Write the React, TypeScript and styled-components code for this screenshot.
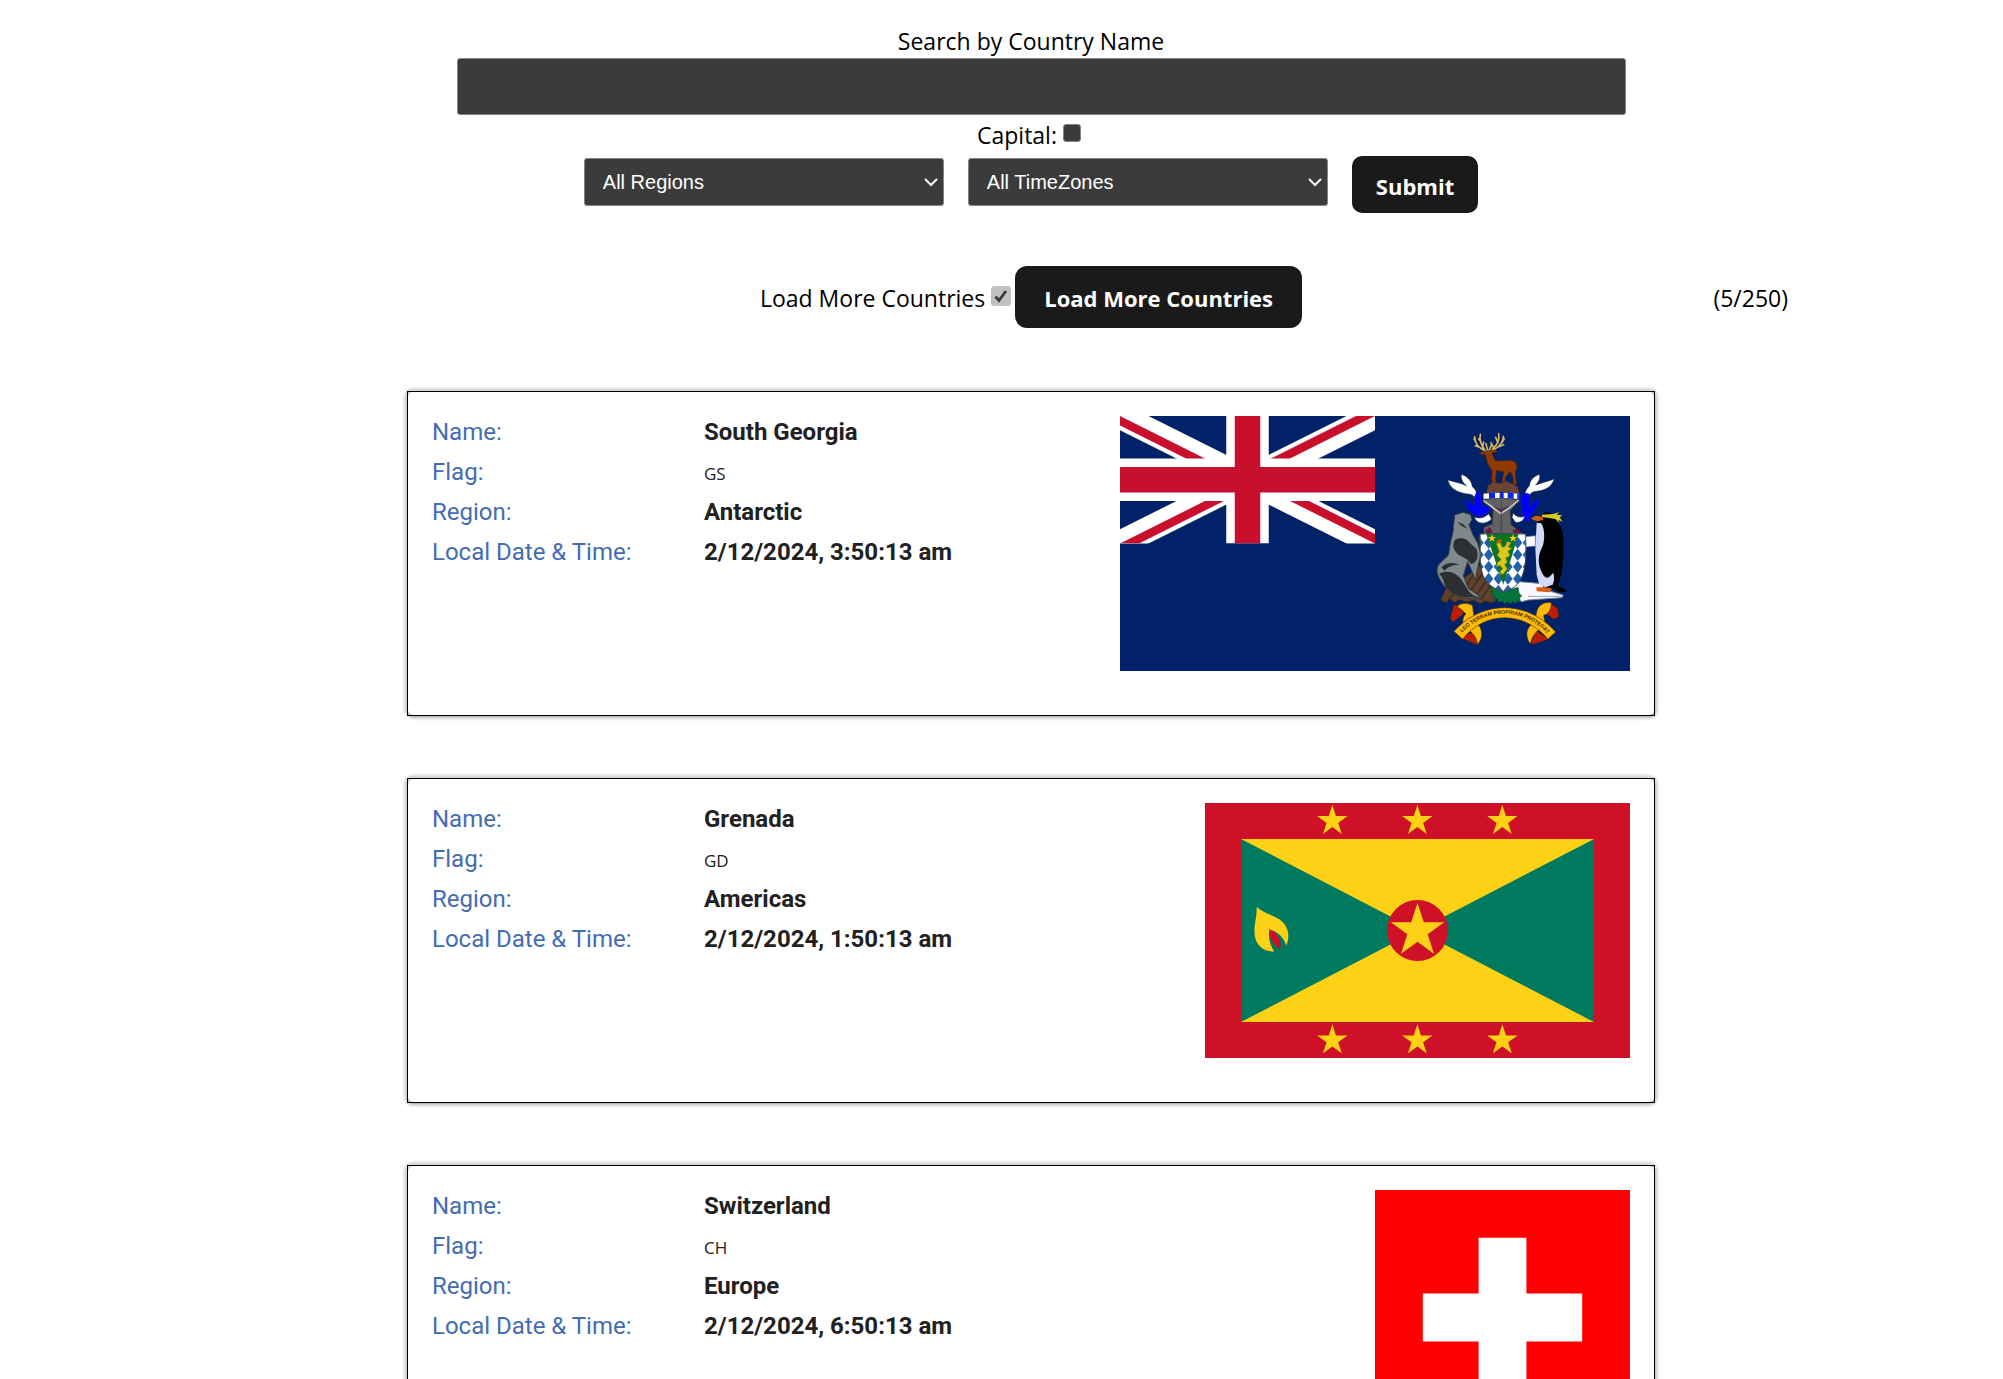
import React, { useId, useState } from "react";
import styled, { createGlobalStyle } from "styled-components";

const GlobalStyle = createGlobalStyle`
  *, *::before, *::after { box-sizing: border-box; }
  body {
    margin: 0;
    background: #fff;
    color: #000;
    font-family: "Segoe UI", "Open Sans", sans-serif;
    font-size: 23px;
    line-height: 32px;
  }
`;

const Page = styled.main`
  display: flex;
  flex-direction: column;
  align-items: center;
  padding: 26px 0 62px 59px;
`;

const SearchForm = styled.form`
  display: flex;
  flex-direction: column;
  align-items: center;
  width: 100%;
`;

const SearchLabel = styled.label`
  padding-bottom: 2px;
  line-height: 30px;
`;

const SearchInput = styled.input`
  color-scheme: dark;
  width: calc(100% - 40px);
  max-width: 1169px;
  height: 57px;
  margin-left: 20px;
  padding: 0 18px;
  border: 1px solid #858585;
  border-radius: 3px;
  background: #3b3b3b;
  color: #fff;
  font: 20px/24px "Liberation Sans", sans-serif;
`;

const CapitalRow = styled.div`
  display: flex;
  align-items: center;
  gap: 6px;
  height: 41px;
  padding-bottom: 2px;
`;

const CheckBox = styled.input<{ $large?: boolean }>`
  appearance: none;
  width: ${(p) => (p.$large ? 20 : 18)}px;
  height: ${(p) => (p.$large ? 20 : 18)}px;
  margin: 0 4px ${(p) => (p.$large ? 2 : 4)}px 0;
  border: 1px solid #858585;
  border-radius: 3px;
  background: #3b3b3b;

  &:checked {
    border-color: #c1c1c1;
    background: #c1c1c1 center / 16px 16px no-repeat
      url("data:image/svg+xml,%3Csvg xmlns='http://www.w3.org/2000/svg' viewBox='0 0 16 16'%3E%3Cpath d='M2.500 8.500l3.500 4L13 3' fill='none' stroke='%233b3b3b' stroke-width='2.800'/%3E%3C/svg%3E");
  }
`;

const Filters = styled.div`
  display: flex;
  flex-wrap: wrap;
  justify-content: center;
  gap: 24px;
`;

const Select = styled.select`
  appearance: none;
  width: 360px;
  height: 48px;
  margin-top: 2px;
  padding: 0 18px;
  border: 1px solid #858585;
  border-radius: 3px;
  background: #3b3b3b right 5px center / 14px 10px no-repeat
    url("data:image/svg+xml,%3Csvg xmlns='http://www.w3.org/2000/svg' viewBox='0 0 14 10'%3E%3Cpath d='M1 2l6 6 6-6' fill='none' stroke='white' stroke-width='2'/%3E%3C/svg%3E");
  color: #fff;
  font: 20px/24px "Liberation Sans", sans-serif;
`;

const Button = styled.button<{ $large?: boolean }>`
  height: ${(p) => (p.$large ? 62 : 57)}px;
  padding: ${(p) => (p.$large ? "2px 29px 0" : "2px 24px 0")};
  border: 0;
  border-radius: ${(p) => (p.$large ? 12 : 10)}px;
  background: #1a1a1a;
  color: #fff;
  font: 700 22px/32px "Segoe UI", "Open Sans", sans-serif;
  cursor: pointer;
`;

const LoadBar = styled.section`
  display: grid;
  grid-template-columns: 1fr auto 1fr;
  align-items: center;
  width: 100%;
  max-width: 1514px;
  margin: 53px 0 63px;
`;

const LoadControls = styled.div`
  grid-column: 2;
  display: flex;
  align-items: center;
`;

const LoadLabel = styled.label`
  margin-right: 6px;
  padding-top: 2px;
`;

const Counter = styled.span`
  justify-self: end;
  padding-top: 2px;
`;

const CountryList = styled.div`
  display: flex;
  flex-direction: column;
  gap: 62px;
  width: 100%;
  max-width: 1248px;
`;

const CardFrame = styled.article`
  border: 1px solid #000;
`;

const CardBody = styled.div`
  display: flex;
  justify-content: space-between;
  align-items: flex-start;
  padding: 24px 24px 44px;
  border-radius: 5px;
  box-shadow: 0 0 3px 4px rgba(0, 0, 0, 0.17), 0 1px 2px 1px rgba(0, 0, 0, 0.2);
`;

const Facts = styled.dl`
  display: grid;
  grid-template-columns: 272px auto;
  grid-auto-rows: 32px;
  row-gap: 8px;
  margin: 0;
  font-family: Roboto, sans-serif;
  font-size: 24px;
  line-height: 32px;
`;

const Term = styled.dt`
  color: #446cb3;
`;

const Value = styled.dd`
  margin: 0;
  color: #212121;
  font-weight: 700;
`;

const Code = styled(Value)`
  font: 400 17px/36px "Segoe UI", "Open Sans", sans-serif;
`;

const FlagArt = styled.svg`
  display: block;
  height: 255px;
  flex: none;
`;

function starPoints(cx: number, cy: number, r: number) {
  return Array.from({ length: 10 }, (_, i) => {
    const radius = i % 2 ? r * 0.382 : r;
    const a = (Math.PI / 5) * i - Math.PI / 2;
    return `${(cx + radius * Math.cos(a)).toFixed(1)},${(cy + radius * Math.sin(a)).toFixed(1)}`;
  }).join(" ");
}

function UnionJack() {
  return (
    <g transform="scale(4.25)">
      <clipPath id="uj-box"><path d="M0 0h60v30H0z" /></clipPath>
      <clipPath id="uj-tri"><path d="M30 15h30v15zv15H0zH0V0zV0h30z" /></clipPath>
      <g clipPath="url(#uj-box)">
        <path d="M0 0l60 30M60 0L0 30" stroke="#fff" strokeWidth="6" />
        <path d="M0 0l60 30M60 0L0 30" clipPath="url(#uj-tri)" stroke="#c8102e" strokeWidth="4" />
        <path d="M30 0v30M0 15h60" stroke="#fff" strokeWidth="10" />
        <path d="M30 0v30M0 15h60" stroke="#c8102e" strokeWidth="6" />
      </g>
    </g>
  );
}

const lozenges: [number, number][] = [];
for (let row = 0; row < 5; row++) {
  for (let col = 0; col < 6; col++) {
    lozenges.push([177 + col * 29, 368 + row * 36]);
  }
}

function CoatOfArms() {
  return (
    <g transform="translate(300 4) scale(0.33333)" strokeLinejoin="round" strokeLinecap="round">
      {/* antlers */}
      <g fill="none" stroke="#d9b65c" strokeWidth="5">
        <path d="M198 93c-15-4-33-18-34-43M193 88c-10-14-16-26-12-45M168 68l-6-12M176 81l-10-4M187 84l4-18M183 66l-7-10M203 92l-5-21" />
        <path d="M212 93c17-5 38-22 38-44M218 87c16-14 21-28 18-46M246 68l7-12M236 80l15-6M222 85l-9-17M234 68l-7-16M207 92l8-19" />
      </g>
      {/* stag */}
      <path d="M179 98l19-5 12-1 17-2 6 5-17 4c3 8 5 16 10 22 14 4 36-2 54 2 9 3 12 12 10 22l-4 12 3 36-9 3-2-30-9-11-13 18 2 24-9 2-2-24 5-20-23-3-2 24 3 22-9 3-6-24 1-27c-12-12-17-25-19-46l-15-1z" fill="#8f3a00" stroke="#4b2105" strokeWidth="2" />
      <path d="M203 198l16-12 20 4 21-6 20 8 14 9 4 19-98 2z" fill="#6b4534" stroke="#3b2922" strokeWidth="2" />
      {/* feathers and mantling */}
      <g stroke="#222b45" strokeWidth="2">
        <path d="M167 239c-4-14-11-16-31-18-27-5-47-17-53-42 20 8 37 8 56 18-12-9-17-22-15-34 20 7 31 20 33 37 12 9 16 20 10 39z" fill="#fff" />
        <path d="M315 235c-3-17 4-28 13-38 2-17 13-28 31-34 2 13-3 23-12 32 20-8 36-10 56-19-8 25-25 34-53 38-15 1-22 8-24 19z" fill="#fff" />
        <path d="M133 237c13 6 22 12 30 20-2-20 0-32 12-46 12 15 15 31 12 49 9-4 16-3 24 5-8 20-23 27-45 22-16-9-28-24-33-50z" fill="#00f" />
        <path d="M306 224c13-8 22-4 25 5 2 13-1 24-2 34 8-14 17-23 30-29-1 16-6 27-17 36-5 18-14 32-30 36-8-12-6-28-6-43-8-12-8-24 0-39z" fill="#00f" />
        <path d="M163 291c16 6 31 2 43-10l9 16c-14 14-33 18-48 3zM280 280c10 12 21 13 34 9-2 12-12 20-28 18l-10-15z" fill="#fff" />
      </g>
      {/* helmet */}
      <path d="M192 242l24-22h56l26 21-26 31 2 42 19 14 18 16-34 5-30 3-57-9 1-22 23-9 5-41z" fill="#626264" stroke="#252529" strokeWidth="3" />
      <path d="M192 243c14 10 32 24 50 38 22-14 39-26 53-40" fill="none" stroke="#c4c4c8" strokeWidth="5" />
      <path d="M225 261l18 8 23-10-22 15z" fill="#701346" stroke="#33152a" />
      <path d="M196 332l14-10 7 14-15 5zM279 332l12-7 15 14-20 3z" fill="#701346" stroke="#222" />
      <path d="M244 240v100M218 272v44" fill="none" stroke="#333338" strokeWidth="2" />
      <path d="M190 220q55-6 108 0v18q-54-6-108 0z" fill="#fff" stroke="#222" strokeWidth="2" />
      <path d="M207 218l18-1v18l-18 1zM239 216h12v18h-12zM263 217l18 1v18l-18-1zM292 220l6 1v17l-6-2z" fill="#0b27e8" />
      {/* seal on its rock */}
      <path d="M150 461l27-25 27 37 24 71-16 5-15-6-17 8-19-10-20 6-22-8-16 9-14-12-10 12-17-7 14-33z" fill="#60422c" stroke="#37271f" strokeWidth="3" />
      <path d="M124 520l40-62M141 526l50-70M161 535l37-50M184 537l27-40M88 533l33-23" stroke="#3b291f" strokeWidth="4" />
      <path d="M105 284l24-7 23 7 4 15-9 15 12 30 14 25 10 34-12 50-4 27-10-23-14-32-13 42 15 38 36 25-20 6c-37-1-70-14-91-41-21-30-27-52-6-69 10-13 22-13 23-32 3-34 14-51 13-74z" fill="#7f888b" stroke="#34393c" strokeWidth="3" />
      <path d="M105 359c21-8 33-4 47 12l17 15c8 23 3 39-15 47-11-16-21-20-39-29-16-16-19-28-10-45zM112 306l17 6 14 14-17-7zM174 350l8-5 2 35-9-3z" fill="#2c3032" />
      <path d="M57 461c27-14 54-2 67 18 17 22 19 42 51 53-43 3-72-4-94-25-11-13-6-30-24-46zM64 442c15-14 35-16 53-8-22 1-34 7-43 18z" fill="#2b2f31" />
      {/* iceberg and grass */}
      <path d="M276 500l22-15 70 6 14 20 47 14-3 8-101 7-20 5-23-10z" fill="#f7f8fb" stroke="#71819a" strokeWidth="3" />
      <path d="M325 529h104" stroke="#9ba8b9" strokeWidth="3" />
      <path d="M349 502h40l7 7-8 8-38-3z" fill="#d65e15" />
      <path d="M210 500l13 2 15 8 24 3 32-11 3 18 8 8-6 5 2 13-10-3-3 8-10-6-8 7-7-8-9 8-7-9-13 4-1-9-11-2 1-9-10-3 5-8z" fill="#07733b" stroke="#064c2c" strokeWidth="2" />
      {/* shield */}
      <clipPath id="gs-shield"><path d="M180 342q65-4 137 0c1 55 5 105-20 145-15 18-32 26-47 28-28-8-50-22-61-49-12-34-7-76-9-124z" /></clipPath>
      <g clipPath="url(#gs-shield)">
        <path d="M175 335h148v185H175z" fill="#fff" />
        {lozenges.map(([x, y]) => (
          <path key={`${x}-${y}`} d={`M${x} ${y - 18}l14 18-14 18-14-18z`} fill="#2360ac" />
        ))}
        <path d="M198 340h98l-46 154z" fill="#087321" />
      </g>
      <path d="M180 342q65-4 137 0c1 55 5 105-20 145-15 18-32 26-47 28-28-8-50-22-61-49-12-34-7-76-9-124z" fill="none" stroke="#39424e" strokeWidth="3" />
      <polygon points={starPoints(216, 355, 13)} fill="#ffc919" />
      <polygon points={starPoints(279, 355, 13)} fill="#ffc919" />
      <path d="M229 370l12-2 6 14 9-3 5-14 12 2-8 14 10 4-11 9 6 13-13 7 5 12-8 8 8 13-14 17-9-7 9-12-9-9-9 5 2-14 12-8-13-13 7-11z" fill="#dfc51d" stroke="#6a8119" strokeWidth="2" />
      <path d="M228 364l14-7 3 8-12 5z" fill="#e14d1b" />
      {/* penguin */}
      <path d="M318 350l28-3v31l-27 3z" fill="#fff" stroke="#71819a" strokeWidth="2" />
      <path d="M352 305c9-16 17-28 31-28 23 2 29 20 34 36 18 25 12 55 13 90-1 35-4 62-17 94l19 9 9 9-25 2-21-14-25-1-13-22-9-100z" fill="#000" />
      <path d="M350 308l14 2c10 18 11 42 5 66-12 24-16 42-10 66 9 22 14 35 28 30l13-14c4 16 2 28-2 36l-22 8-18-8-8-30-4-80z" fill="#d4d9fa" />
      <path d="M376 378c-14 34-20 62-4 88 12 10 20 4 22-12l8-60z" fill="#000" />
      <path d="M332 296l15-9 21 3 2 10-19 4z" fill="#cd5a12" />
      <path d="M365 284l33-2 20-5-8 7 17 2-8 6 9 13-13-6 4 11-13-13-39-6z" fill="#d3cc28" />
      {/* motto scroll */}
      <g stroke="#54340d" strokeWidth="2">
        <path d="M102 555l31 5-5 23-28 23-9-9zM387 547l26 19 3 23-15 9-27-23-4-24zM118 651l49-16 6 39zM334 669l14-36 38 24-45 15z" fill="#bf1b05" />
        <path d="M111 561c10-15 38-13 47-3 2 22 4 37 18 57 14 20 11 40-3 59-3-26-18-38-37-53-12-10-8-33 2-39-10-10-17-18-27-21zM394 548c-22-4-39 8-43 24-4 17-4 25-17 42-18 14-17 38-3 59 5-19 9-31 31-49 19-16 9-28 9-38 13-4 22-12 23-38z" fill="#ffba08" />
        <path d="M102 634c82-93 217-97 305 2l-23 21c-72-84-188-86-256 0z" fill="#ffba08" />
      </g>
      <path id="gs-motto" d="M120 644c75-83 192-85 268 4" fill="none" />
      <text fontFamily="Liberation Sans, sans-serif" fontSize="16" fontWeight="700" fill="#4a2a05">
        <textPath href="#gs-motto" startOffset="50%" textAnchor="middle">LEO TERRAM PROPRIAM PROTEGAT</textPath>
      </text>
    </g>
  );
}

function SouthGeorgiaFlag() {
  return (
    <FlagArt viewBox="0 0 510 255" width="510" role="img" aria-label="Flag of South Georgia">
      <path d="M0 0h510v255H0z" fill="#012169" />
      <UnionJack />
      <CoatOfArms />
    </FlagArt>
  );
}

function GrenadaFlag() {
  return (
    <FlagArt viewBox="0 0 1275 765" width="425" role="img" aria-label="Flag of Grenada">
      <path d="M0 0h1275v765H0z" fill="#ce1126" />
      <path d="M108 108h1059v549H108z" fill="#fcd116" />
      <path d="M108 108l529.500 274.500L108 657zM1167 108L637.500 382.500 1167 657z" fill="#007a5e" />
      <circle cx="637.500" cy="382.500" r="91.500" fill="#ce1126" />
      <polygon points={starPoints(637.5, 384, 84)} fill="#fcd116" />
      {[382, 637, 892].flatMap((x) =>
        [54, 712].map((y) => (
          <polygon key={`${x}-${y}`} points={starPoints(x, y, 48)} fill="#fcd116" />
        )),
      )}
      <path d="M155 312c20 20 58 25 78 45 20 21 21 46 11 71-8-25-24-41-50-48-5 24 0 43 14 66-29 0-52-15-58-44-6-31 6-53 5-90z" fill="#fcd116" />
      <path d="M192 378c24 9 37 29 34 61-22-14-34-31-34-61z" fill="#ce1126" />
    </FlagArt>
  );
}

function SwitzerlandFlag() {
  return (
    <FlagArt viewBox="0 0 32 32" width="255" role="img" aria-label="Flag of Switzerland">
      <path d="M0 0h32v32H0z" fill="#f00" />
      <path d="M13 6h6v7h7v6h-7v7h-6v-7H6v-6h7z" fill="#fff" />
    </FlagArt>
  );
}

const countries = [
  { name: "South Georgia", code: "GS", region: "Antarctic", time: "2/12/2024, 3:50:13 am", Flag: SouthGeorgiaFlag },
  { name: "Grenada", code: "GD", region: "Americas", time: "2/12/2024, 1:50:13 am", Flag: GrenadaFlag },
  { name: "Switzerland", code: "CH", region: "Europe", time: "2/12/2024, 6:50:13 am", Flag: SwitzerlandFlag },
];

export default function App() {
  const id = useId();
  const [query, setQuery] = useState("");
  const [byCapital, setByCapital] = useState(false);
  return (
    <>
      <GlobalStyle />
      <Page>
        <SearchForm onSubmit={(e) => e.preventDefault()}>
          <SearchLabel htmlFor={`${id}-name`}>Search by Country Name</SearchLabel>
          <SearchInput id={`${id}-name`} type="text" value={query} onChange={(e) => setQuery(e.target.value)} />
          <CapitalRow>
            <label htmlFor={`${id}-capital`}>Capital:</label>
            <CheckBox id={`${id}-capital`} type="checkbox" checked={byCapital} onChange={(e) => setByCapital(e.target.checked)} />
          </CapitalRow>
          <Filters>
            <Select aria-label="Region" defaultValue="all">
              <option value="all">All Regions</option>
              <option>Americas</option>
              <option>Antarctic</option>
              <option>Europe</option>
            </Select>
            <Select aria-label="Time zone" defaultValue="all">
              <option value="all">All TimeZones</option>
              <option>UTC-04:00</option>
              <option>UTC-02:00</option>
              <option>UTC+01:00</option>
            </Select>
            <Button type="submit">Submit</Button>
          </Filters>
        </SearchForm>
        <LoadBar>
          <LoadControls>
            <LoadLabel htmlFor={`${id}-load`}>Load More Countries</LoadLabel>
            <CheckBox id={`${id}-load`} type="checkbox" $large defaultChecked />
            <Button type="button" $large>Load More Countries</Button>
          </LoadControls>
          <Counter>(5/250)</Counter>
        </LoadBar>
        <CountryList>
          {countries.map(({ name, code, region, time, Flag }) => (
            <CardFrame key={code}>
              <CardBody>
                <Facts>
                  <Term>Name:</Term>
                  <Value>{name}</Value>
                  <Term>Flag:</Term>
                  <Code>{code}</Code>
                  <Term>Region:</Term>
                  <Value>{region}</Value>
                  <Term>Local Date &amp; Time:</Term>
                  <Value>{time}</Value>
                </Facts>
                <Flag />
              </CardBody>
            </CardFrame>
          ))}
        </CountryList>
      </Page>
    </>
  );
}
